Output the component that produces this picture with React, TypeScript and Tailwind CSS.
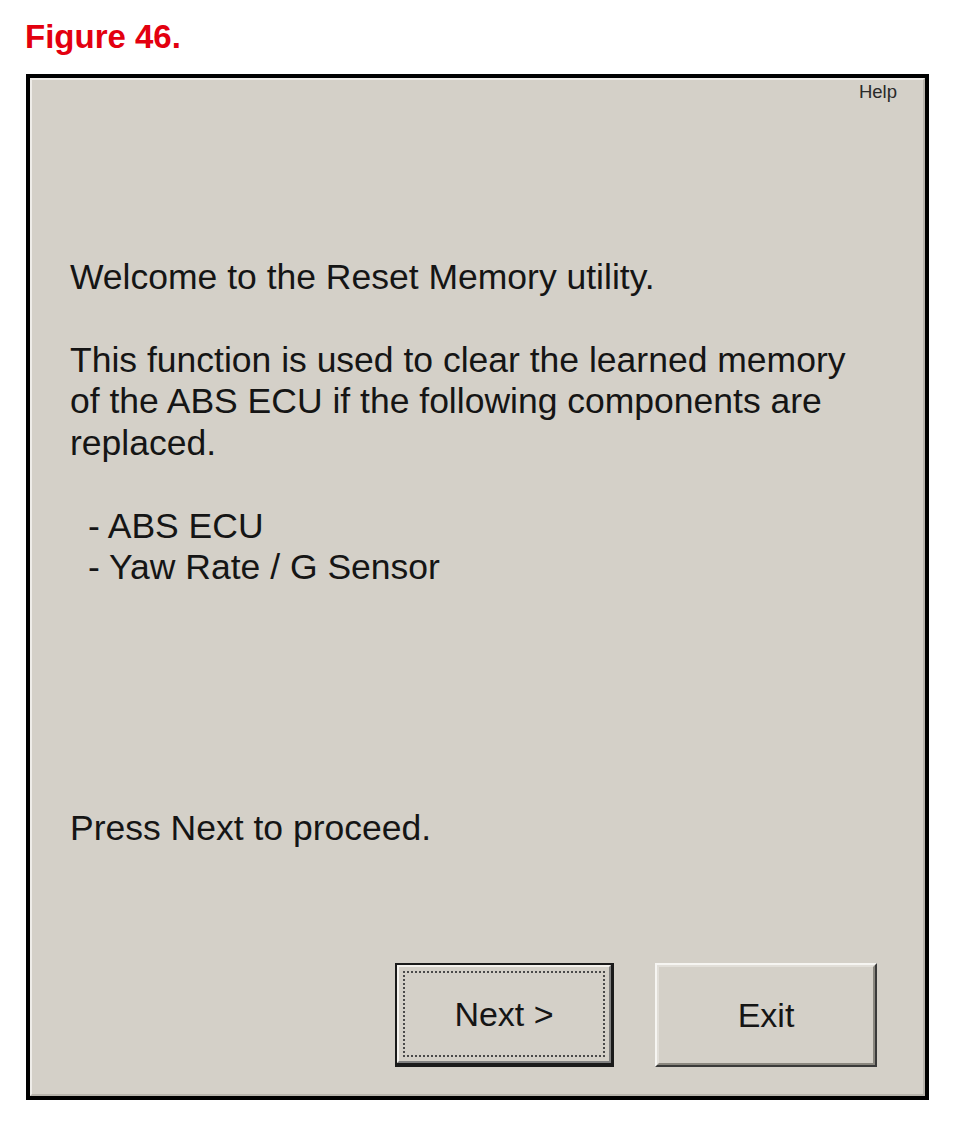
export default function App() {
  return (
    <div className="min-h-[1147px] w-[967px] bg-white font-['Liberation_Sans',Arial,sans-serif]">
      <div className="pl-[25px] pt-[20px] text-[33px] font-bold leading-[33px] text-[#e3000f]">
        Figure 46.
      </div>

      {/* Dialog */}
      <div className="ml-[26px] mt-[21px] h-[1026px] w-[903px] border-4 border-black">
        <div className="flex h-full flex-col border-2 border-t-[#eeece8] border-l-[#eeece8] border-b-[#b8b4ac] border-r-[#b8b4ac] bg-[#d4d0c8] text-[#151515]">
          <div className="flex justify-end pr-[26px] pt-[3px]">
            <span className="text-[18.5px] leading-[18.5px] text-[#2a2a2a]">Help</span>
          </div>

          <div className="mt-[155px] pl-[38px] text-[35.5px] leading-[41.5px]">
            <p>Welcome to the Reset Memory utility.</p>
            <p className="mt-[41.5px]">
              This function is used to clear the learned memory
              <br />
              of the ABS ECU if the following components are
              <br />
              replaced.
            </p>
            <div className="mt-[41.5px] pl-[18px]">
              <p>- ABS ECU</p>
              <p>- Yaw Rate / G Sensor</p>
            </div>
          </div>

          <p className="mt-auto pl-[38px] text-[35.5px] leading-[41.5px]">Press Next to proceed.</p>

          <div className="mt-[114px] flex justify-end gap-[41px] pb-[27px] pr-[46px]">
            {/* Default button with focus rect */}
            <button className="h-[104px] w-[219px] border-2 border-b-[4px] border-r-[3px] border-[#1a1a1a] bg-[#d4d0c8] p-0">
              <div className="flex h-full w-full border-2 border-t-[#f4f2ee] border-l-[#f4f2ee] border-b-[#808080] border-r-[#808080] p-[4px]">
                <div className="flex flex-1 items-center justify-center border-2 border-dotted border-[#4a4a4a] text-[34px] text-[#151515]">
                  Next &gt;
                </div>
              </div>
            </button>

            <button className="h-[104px] w-[222px] border-2 border-t-[#f6f5f2] border-l-[#f6f5f2] border-b-[#3a3a3a] border-r-[#3a3a3a] bg-[#d4d0c8] p-0">
              <div className="flex h-full w-full items-center justify-center border-2 border-t-[#e2dfd9] border-l-[#e2dfd9] border-b-[#8a877f] border-r-[#8a877f] text-[34px] text-[#151515]">
                Exit
              </div>
            </button>
          </div>
        </div>
      </div>
    </div>
  )
}
